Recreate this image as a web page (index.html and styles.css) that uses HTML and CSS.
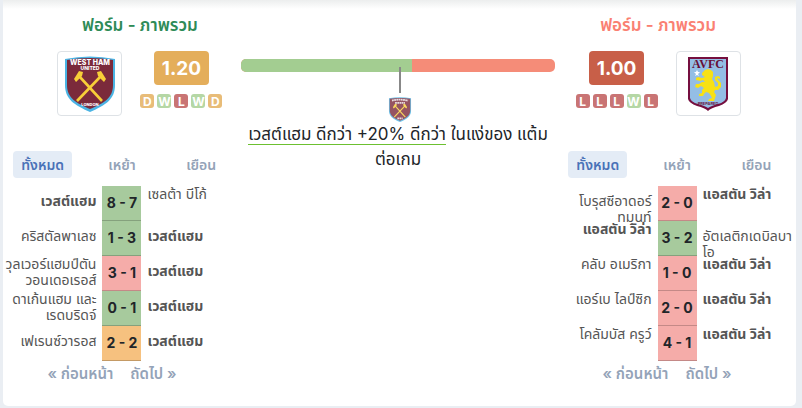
FILE: index.html
```html
<!DOCTYPE html>
<html lang="th">
<head>
<meta charset="utf-8">
<meta name="viewport" content="width=device-width, initial-scale=1">
<title>ฟอร์ม - ภาพรวม</title>
<link rel="stylesheet" href="styles.css">
</head>
<body>
<svg class="defs" aria-hidden="true">
  <symbol id="shield" viewBox="0 0 50 56">
    <path d="M0 3Q25-2 50 3V29C50 43 41 49 25 56C9 49 0 43 0 29Z" fill="#4bb4e4"/>
    <path d="M2 4Q25 0 48 4V29C48 42 39 47 25 53C11 47 2 42 2 29Z" fill="#7b2a3b"/>
    <path d="M14 20L37 45M36 20L12 45" stroke="#f7cf38" stroke-width="2.6" fill="none"/>
    <path d="M9 23L14 15L18 16L17 20L11 26Z M41 23L36 15L32 16L33 20L39 26Z" fill="#f7cf38"/>
  </symbol>
</svg>

<main class="card">
  <section class="team">
    <header class="summary home">
      <h2 class="title">ฟอร์ม - ภาพรวม</h2>
      <div class="crest">
        <svg class="west" viewBox="0 0 50 56" role="img" aria-label="West Ham United">
          <use href="#shield"/>
          <g fill="#fff" font-family="Inter, sans-serif" font-weight="800" text-anchor="middle">
            <text x="25" y="9" font-size="7">WEST HAM</text>
            <text x="25" y="14" font-size="5">UNITED</text>
            <text x="25" y="50" font-size="4">LONDON</text>
          </g>
        </svg>
      </div>
      <div class="form">
        <div class="points amber">1.20</div>
        <div class="results"><b class="d">D</b><b class="w">W</b><b class="l">L</b><b class="w">W</b><b class="d">D</b></div>
      </div>
    </header>
    <div class="tabs">
      <div><button type="button" class="tab active">ทั้งหมด</button></div>
      <div><button type="button" class="tab">เหย้า</button></div>
      <div><button type="button" class="tab">เยือน</button></div>
    </div>
    <table class="matches">
      <tr><td class="name host low"><div><b>เวสต์แฮม</b></div></td><td class="score win">8 - 7</td><td class="name"><div>เซลต้า บีโก้</div></td></tr>
      <tr><td class="name host low"><div>คริสตัลพาเลซ</div></td><td class="score win">1 - 3</td><td class="name low"><div><b>เวสต์แฮม</b></div></td></tr>
      <tr><td class="name host"><div>วุลเวอร์แฮมป์ตัน<br>วอนเดอเรอส์</div></td><td class="score loss">3 - 1</td><td class="name low"><div><b>เวสต์แฮม</b></div></td></tr>
      <tr><td class="name host"><div>ดาเก้นแฮม และ<br>เรดบริดจ์</div></td><td class="score win">0 - 1</td><td class="name low"><div><b>เวสต์แฮม</b></div></td></tr>
      <tr><td class="name host low"><div>เฟเรนซ์วารอส</div></td><td class="score draw">2 - 2</td><td class="name low"><div><b>เวสต์แฮม</b></div></td></tr>
    </table>
    <nav class="pager"><a href="#">« ก่อนหน้า</a><a href="#">ถัดไป »</a></nav>
  </section>

  <section class="compare">
    <div class="bar">
      <div class="ahead"></div>
      <div class="marker">
        <svg viewBox="0 0 50 56" aria-hidden="true">
          <use href="#shield"/>
          <path d="M7 8Q25 4 43 8M14 13H36M19 48H31" stroke="#fff" stroke-width="4" stroke-dasharray="4 1" fill="none" opacity="0.8"/>
        </svg>
      </div>
    </div>
    <p class="verdict"><span class="lead">เวสต์แฮม ดีกว่า +20% ดีกว่า</span> ในแง่ของ แต้ม<br>ต่อเกม</p>
  </section>

  <section class="team">
    <header class="summary away">
      <h2 class="title">ฟอร์ม - ภาพรวม</h2>
      <div class="form">
        <div class="points red">1.00</div>
        <div class="results"><b class="l">L</b><b class="l">L</b><b class="l">L</b><b class="w">W</b><b class="l">L</b></div>
      </div>
      <div class="crest">
        <svg class="villa" viewBox="0 0 40 54" role="img" aria-label="Aston Villa">
          <path d="M0 0H40V42Q39 46 31 49Q23 51 20 54Q17 51 9 49Q1 46 0 42Z" fill="#750f3f"/>
          <path d="M2 2H38V41Q37 45 30 47Q23 49 20 51Q17 49 10 47Q3 45 2 41Z" fill="#94bee5"/>
          <text x="20" y="11" font-family="Liberation Serif, serif" font-weight="700" font-size="12" text-anchor="middle" fill="#670e36">AVFC</text>
          <path d="M14 16L17 13L20 12L23 13L25 15L25 19L24 22L26 25L27 30L30 29L30 26L27 23L27 20L30 19L32 20L32 22L30 21L29 22L33 26L33 30L30 33L27 33L26 35L28 38L27 41L26 44L20 44L21 42L24 41L23 39L21 36L18 35L16 37L15 39L11 39L11 37L14 36L14 33L16 31L13 29L10 31L7 30L8 27L11 27L14 25L17 25L15 23L12 24L8 23L8 21L10 20L14 21L17 20L14 18Z" fill="#f8e115"/>
          <path d="M9 13L10 15L12 15L10 17L11 19L9 18L7 19L8 17L6 15H8Z" fill="#fff"/>
          <text x="20" y="48" font-family="Inter, sans-serif" font-weight="600" font-size="4" text-anchor="middle" fill="#670e36">PREPARED</text>
        </svg>
      </div>
    </header>
    <div class="tabs">
      <div><button type="button" class="tab active">ทั้งหมด</button></div>
      <div><button type="button" class="tab">เหย้า</button></div>
      <div><button type="button" class="tab">เยือน</button></div>
    </div>
    <table class="matches">
      <tr><td class="name host low"><div>โบรุสซีอาดอร์<br>ทมุนท์</div></td><td class="score loss">2 - 0</td><td class="name"><div><b>แอสตัน วิล่า</b></div></td></tr>
      <tr><td class="name host"><div><b>แอสตัน วิล่า</b></div></td><td class="score win">3 - 2</td><td class="name low"><div>อัตเลติกเดบิลบา<br>โอ</div></td></tr>
      <tr><td class="name host"><div>คลับ อเมริกา</div></td><td class="score loss">1 - 0</td><td class="name"><div><b>แอสตัน วิล่า</b></div></td></tr>
      <tr><td class="name host"><div>แอร์เบ ไลป์ซิก</div></td><td class="score loss">2 - 0</td><td class="name"><div><b>แอสตัน วิล่า</b></div></td></tr>
      <tr><td class="name host"><div>โคลัมบัส ครูว์</div></td><td class="score loss">4 - 1</td><td class="name"><div><b>แอสตัน วิล่า</b></div></td></tr>
    </table>
    <nav class="pager"><a href="#">« ก่อนหน้า</a><a href="#">ถัดไป »</a></nav>
  </section>
</main>
</body>
</html>
```
FILE: styles.css
```css
* { box-sizing: border-box; }

body {
  margin: 0;
  background: #eaeef3;
  color: #212529;
  font-family: Inter, "Noto Sans Thai", "Noto Sans", sans-serif;
}

.defs { position: absolute; width: 0; height: 0; }

.card {
  display: grid;
  grid-template-columns: 30% 1fr 30%;
  margin: 0 6px 0 3px;
  padding: 13px 0 20px;
  border-radius: 0 0 5px 5px;
  background: linear-gradient(#eceeee, #fff 9px);
}

.summary {
  display: flex;
  flex-wrap: wrap;
  justify-content: center;
  column-gap: 18px;
}
.home { padding-left: 36px; }
.away { padding-right: 38px; }

.title {
  width: 100%;
  margin: 0 0 14px;
  font-size: 17px;
  line-height: 24px;
  font-weight: 600;
  text-align: center;
  color: #2e8b57;
}
.away .title { color: #fa8072; }

.crest {
  display: flex;
  align-items: center;
  justify-content: center;
  width: 65px;
  height: 65px;
  border: 1px solid #dee2e6;
  border-radius: 4px;
  background: #fff;
}
.west { width: 50px; height: 56px; }
.villa { width: 40px; height: 54px; }

.points {
  width: 55px;
  margin: 0 auto 9px;
  border-radius: 4px;
  color: #fff;
  font-size: 19px;
  line-height: 36px;
  height: 34px;
  font-weight: 700;
  text-align: center;
}
.amber { background: #e4ae5b; }
.red { background: #c85f48; }

.results { display: flex; gap: 3px; }
.results b {
  display: flex;
  justify-content: center;
  width: 14px;
  height: 14px;
  border-radius: 3px;
  color: #fff;
  font-size: 12px;
  line-height: 16px;
}
.d { background: #e8bc78; }
.w { background: #b5d7a5; }
.l { background: #c97474; }

.tabs {
  display: grid;
  grid-template-columns: 1fr 1fr 1fr;
  justify-items: center;
  margin: 35px 0 8px;
}
.tab {
  display: block;
  height: 27px;
  padding: 0 8px;
  border: 0;
  border-radius: 4px;
  background: none;
  color: #94a3b8;
  font: 600 14px/25px Inter, "Noto Sans Thai", "Noto Sans", sans-serif;
}
.active { background: #e4ecf6; color: #4a72b8; }

.matches {
  width: 100%;
  table-layout: fixed;
  border-collapse: separate;
  border-spacing: 0;
}
.matches td { height: 35px; padding: 0; vertical-align: top; }
.matches .name div {
  height: 35px;
  padding: 0 0 0 6px;
  overflow: hidden;
  color: #555;
  font-size: 14px;
  line-height: 16px;
  white-space: nowrap;
}
.matches .host div { padding: 0 6px 0 0; text-align: right; }
.matches .low div { height: 38px; margin-bottom: -3px; padding-top: 7px; }
.name b { font-weight: 700; }
.matches .score {
  width: 39px;
  border-bottom: 1px solid #0003;
  font-size: 14px;
  line-height: 34px;
  font-weight: 700;
  text-align: center;
  white-space: nowrap;
}
.win { background: #a7ca9d; }
.loss { background: #f5aca9; }
.draw { background: #f6c17f; }

.pager {
  display: flex;
  justify-content: center;
  gap: 17px;
  padding-right: 20px;
  line-height: 25px;
}
.pager a {
  color: #94a3b8;
  font-size: 15px;
  font-weight: 600;
  text-decoration: none;
  white-space: nowrap;
}

.compare { padding: 46px 3px 0 0; text-align: center; }
.bar {
  position: relative;
  height: 13px;
  border-radius: 5px;
  background: #f58c78;
}
.ahead {
  width: 54.5%;
  height: 100%;
  border-radius: 5px 0 0 5px;
  background: #a3cd91;
}
.marker {
  position: absolute;
  top: 8px;
  left: calc(50% - 10px);
  width: 24px;
}
.marker::before {
  content: "";
  display: block;
  width: 2px;
  height: 26px;
  margin: 0 auto 4px;
  background: #888;
}
.marker svg { display: block; width: 24px; height: 25px; opacity: 0.8; }

.verdict {
  margin: 50px 0 0;
  font-size: 17px;
  line-height: 25px;
  white-space: nowrap;
}
.lead { border-bottom: 1px solid #6cc030; }
```
